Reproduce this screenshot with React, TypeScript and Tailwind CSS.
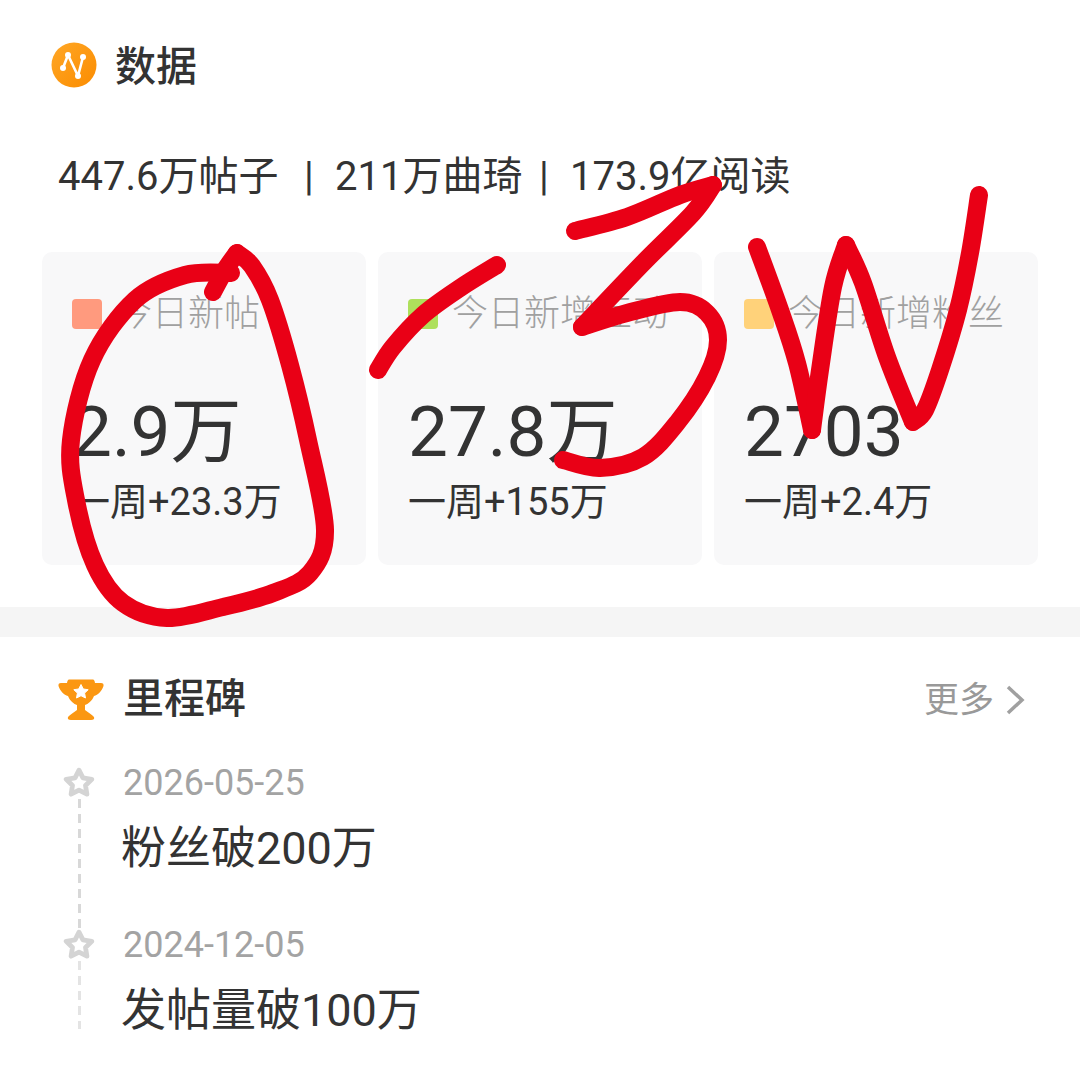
type Pt = [number, number];

const FONT = "font-['Roboto','Noto_Sans_CJK_SC',sans-serif]";

const stats = [
  { label: '今日新帖', color: 'bg-[#ff9a7e]', value: '2.9万', week: '一周+23.3万' },
  { label: '今日新增互动', color: 'bg-[#aee05c]', value: '27.8万', week: '一周+155万' },
  { label: '今日新增粉丝', color: 'bg-[#ffd27a]', value: '2703', week: '一周+2.4万' },
];

// hand drawn marker strokes, each list is one smooth run between sharp corners
const strokes: Pt[][] = [
  [[213, 292], [225, 270], [237, 253]],
  [[237, 253], [252, 266], [270, 300], [290, 365], [308, 440], [325, 530], [310, 573], [273, 593], [223, 607], [167, 618], [123, 603], [95, 565], [76, 500], [71, 440], [92, 360], [135, 300], [185, 275], [231, 273]],
  [[497, 265], [460, 288], [423, 315], [393, 347], [378, 370]],
  [[575, 231], [627, 217], [680, 195], [713, 185]],
  [[713, 185], [693, 213], [643, 263], [582, 327]],
  [[582, 327], [627, 313], [680, 302], [707, 313], [718, 340], [707, 377], [677, 423], [643, 457], [600, 468], [563, 460]],
  [[757, 247], [780, 310], [797, 363], [812, 430]],
  [[812, 430], [820, 370], [833, 287], [846, 245]],
  [[846, 245], [863, 283], [887, 357], [913, 422]],
  [[913, 422], [925, 410], [940, 370], [958, 310], [970, 253], [979, 195]],
];

function smooth(p: Pt[]) {
  let d = `M${p[0][0]} ${p[0][1]}`;
  for (let i = 0; i < p.length - 1; i++) {
    const a = p[Math.max(i - 1, 0)];
    const b = p[i];
    const c = p[i + 1];
    const e = p[Math.min(i + 2, p.length - 1)];
    const c1x = b[0] + (c[0] - a[0]) / 6;
    const c1y = b[1] + (c[1] - a[1]) / 6;
    const c2x = c[0] - (e[0] - b[0]) / 6;
    const c2y = c[1] - (e[1] - b[1]) / 6;
    d += ` C${c1x} ${c1y} ${c2x} ${c2y} ${c[0]} ${c[1]}`;
  }
  return d;
}

function DataIcon() {
  return (
    <svg width="46" height="46" viewBox="0 0 46 46">
      <defs>
        <linearGradient id="dataGrad" x1="0" y1="0" x2="1" y2="1">
          <stop offset="0" stopColor="#ffa726" />
          <stop offset="1" stopColor="#fb8c00" />
        </linearGradient>
      </defs>
      <circle cx="23" cy="23" r="22.5" fill="url(#dataGrad)" />
      <path d="M12 26 L17 13 L27 34 L32 15" fill="none" stroke="#fff" strokeWidth="2.6" strokeLinejoin="round" />
      <circle cx="12" cy="26" r="3" fill="#fff" />
      <circle cx="17" cy="13" r="3" fill="#fff" />
      <circle cx="27" cy="34" r="3" fill="#fff" />
      <circle cx="32" cy="15" r="3" fill="#fff" />
    </svg>
  );
}

function TrophyIcon() {
  return (
    <svg width="46" height="42" viewBox="0 0 46 42">
      <path d="M11 .5 H35 Q36.500 .5 37 4 H43 Q46 4 45.500 7 C44 12 40 16 36 17 C34 22 30 25 27 26 V31 C30 33 34 36 36 38 Q37 41 33 41 H13 Q9 41 10 38 C12 36 16 33 19 31 V26 C16 25 12 22 10 17 C6 16 2 12 .5 7 Q0 4 3 4 H9 Q9.500 .5 11 .5 Z" fill="#fb9712" />
      <path d="M23 5.500 L25.300 10 L30.200 10.700 L26.600 14.100 L27.500 19 L23 16.700 L18.500 19 L19.400 14.100 L15.800 10.700 L20.700 10 Z" fill="#fff" stroke="#fff" strokeWidth="1" strokeLinejoin="round" />
    </svg>
  );
}

function StarIcon() {
  return (
    <svg width="32" height="32" viewBox="1 1 30 30">
      <path d="M16 4 L19.700 11.200 L28 12.500 L22.100 18.300 L23.400 26.500 L16 22.700 L8.600 26.500 L9.900 18.300 L4 12.500 L12.300 11.200 Z" fill="none" stroke="#d4d4d4" strokeWidth="4.500" strokeLinejoin="round" />
    </svg>
  );
}

function StatCard({ label, color, value, week }: (typeof stats)[number]) {
  return (
    <div className="bg-[#f8f8f9] rounded-[10px] h-[313px] pl-[30px] pt-[42px]">
      <div className="flex items-center h-[40px]">
        <div className={`w-[30px] h-[30px] rounded-[4px] ${color}`}></div>
        <div className="ml-[14px] text-[36px] leading-[40px] font-light text-[#a0a0a0]">{label}</div>
      </div>
      <div className="mt-[53px] text-[71px] leading-[90px] text-[#333333]">{value}</div>
      <div className="text-[38px] leading-[50px] text-[#333333]">{week}</div>
    </div>
  );
}

function Milestone({ date, title, last }: { date: string; title: string; last?: boolean }) {
  return (
    <div className="flex">
      <div className="w-[64px] flex flex-col items-center shrink-0">
        <StarIcon />
        <div
          className={`w-[3px] bg-[repeating-linear-gradient(to_bottom,#d8d8d8_0,#d8d8d8_9px,transparent_9px,transparent_15px)] ${last ? 'opacity-70 h-[68px]' : 'h-[130px]'}`}
        ></div>
      </div>
      <div className="pl-[12px] -mt-[4px]">
        <div className="text-[36px] leading-[40px] text-[#a3a3a3]">{date}</div>
        <div className="mt-[18px] -ml-[2px] text-[45px] leading-[56px] text-[#333333]">{title}</div>
      </div>
    </div>
  );
}

export default function App() {
  return (
    <div className={`relative w-[1080px] h-[1067px] bg-white overflow-hidden ${FONT}`}>
      {/* Data section */}
      <div className="h-[607px] pt-[42px]">
        <div className="flex items-center pl-[51px] h-[46px]">
          <DataIcon />
          <span className="ml-[18px] mt-[5px] text-[41px] font-medium text-[#333333]">数据</span>
        </div>
        <div className="mt-[62px] pl-[58px] flex text-[40px] leading-[54px] text-[#333333] whitespace-pre">
          <span className="w-[246px]">447.6万帖子</span>
          <span className="w-[31px]">|</span>
          <span className="w-[204px]">211万曲琦</span>
          <span className="w-[31px]">|</span>
          <span>173.9亿阅读</span>
        </div>
        <div className="mt-[48px] mx-[42px] grid grid-cols-3 gap-[12px]">
          {stats.map((s) => (
            <StatCard key={s.label} {...s} />
          ))}
        </div>
      </div>

      <div className="h-[30px] bg-[#f5f5f5]"></div>

      {/* Milestones */}
      <div className="pt-[40px]">
        <div className="flex items-center h-[46px] pl-[58px] pr-[54px]">
          <TrophyIcon />
          <span className="ml-[19px] text-[41px] font-medium text-[#333333]">里程碑</span>
          <span className="ml-auto mt-[3px] text-[35px] text-[#999999]">更多</span>
          <svg className="ml-[10px]" width="22" height="32" viewBox="0 0 22 32">
            <path d="M4 3 L18 16 L4 29" fill="none" stroke="#a0a0a0" strokeWidth="3.500" />
          </svg>
        </div>
        <div className="mt-[44px] pl-[47px] flex flex-col">
          <Milestone date="2026-05-25" title="粉丝破200万" />
          <Milestone date="2024-12-05" title="发帖量破100万" last />
        </div>
      </div>

      {/* Red marker scribbles on top of the screenshot */}
      <svg className="absolute inset-0 pointer-events-none" width="1080" height="1067" viewBox="0 0 1080 1067">
        {strokes.map((p, i) => (
          <path key={i} d={smooth(p)} fill="none" stroke="#e90016" strokeWidth="18" strokeLinecap="round" strokeLinejoin="round" />
        ))}
      </svg>
    </div>
  );
}
